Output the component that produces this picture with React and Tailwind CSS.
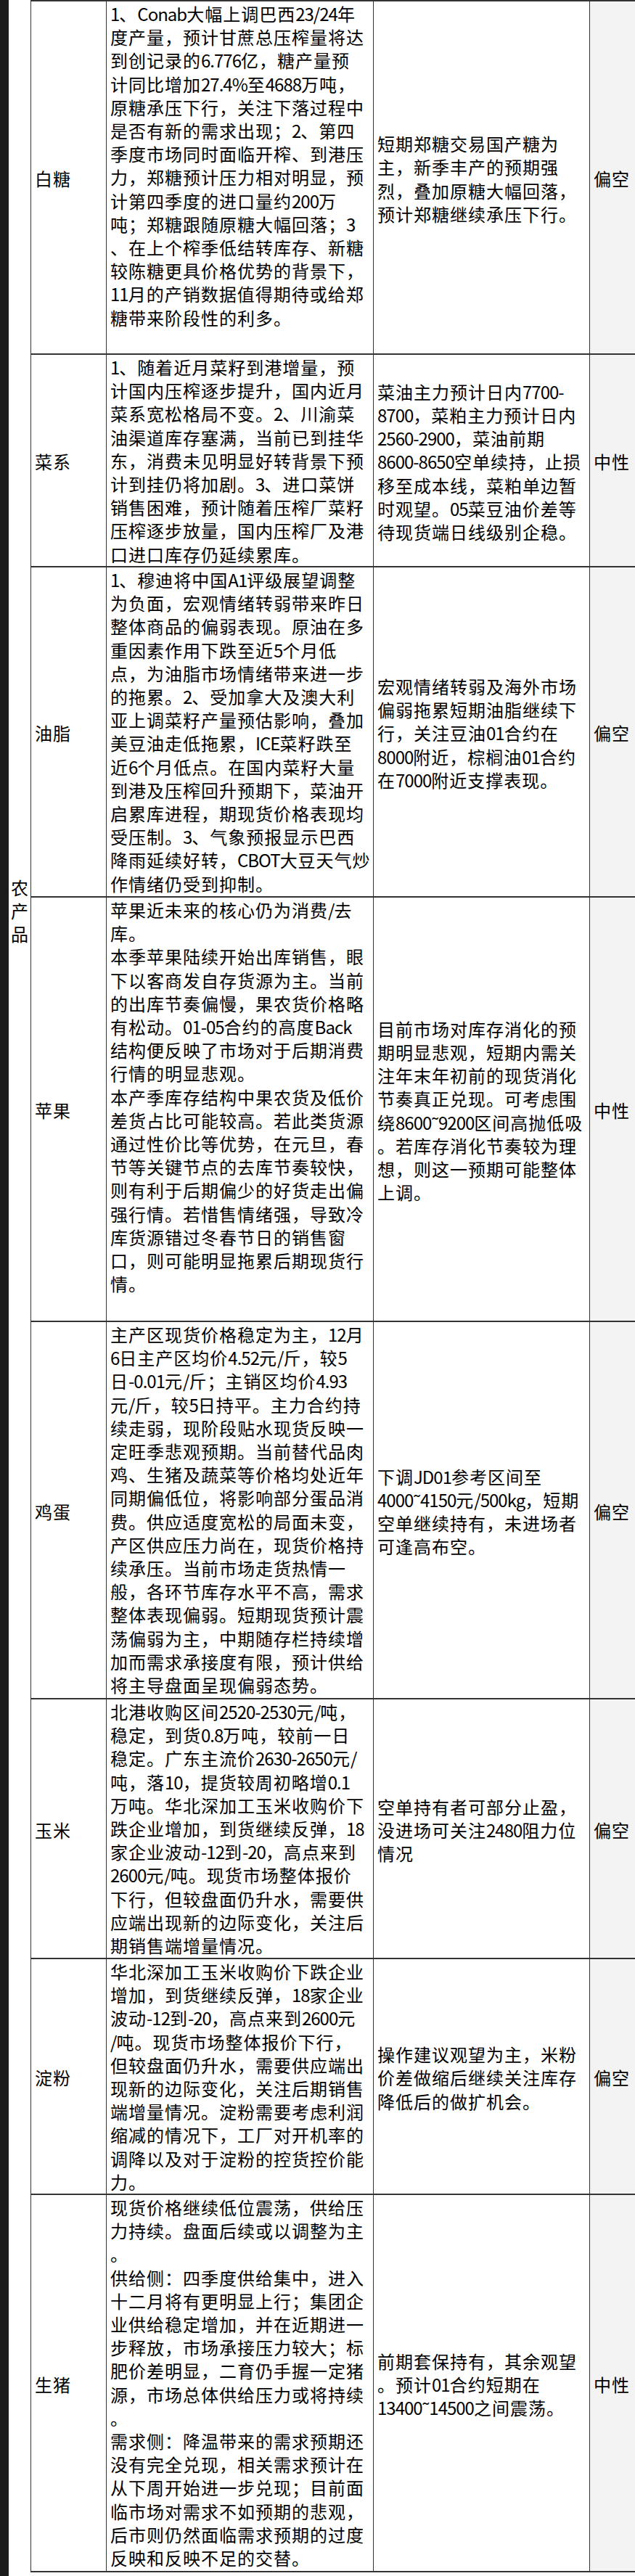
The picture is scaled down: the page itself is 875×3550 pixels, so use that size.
import React from "react";

const rows = [
  {
    name: "白糖",
    h: 487,
    view: "偏空",
    long: [
      "1、Conab大幅上调巴西23/24年",
      "度产量，预计甘蔗总压榨量将达",
      "到创记录的6.776亿，糖产量预",
      "计同比增加27.4%至4688万吨，",
      "原糖承压下行，关注下落过程中",
      "是否有新的需求出现；2、第四",
      "季度市场同时面临开榨、到港压",
      "力，郑糖预计压力相对明显，预",
      "计第四季度的进口量约200万",
      "吨；郑糖跟随原糖大幅回落；3",
      "、在上个榨季低结转库存、新糖",
      "较陈糖更具价格优势的背景下，",
      "11月的产销数据值得期待或给郑",
      "糖带来阶段性的利多。",
    ],
    short: [
      "短期郑糖交易国产糖为",
      "主，新季丰产的预期强",
      "烈，叠加原糖大幅回落，",
      "预计郑糖继续承压下行。",
    ],
  },
  {
    name: "菜系",
    h: 293,
    view: "中性",
    long: [
      "1、随着近月菜籽到港增量，预",
      "计国内压榨逐步提升，国内近月",
      "菜系宽松格局不变。2、川渝菜",
      "油渠道库存塞满，当前已到挂华",
      "东，消费未见明显好转背景下预",
      "计到挂仍将加剧。3、进口菜饼",
      "销售困难，预计随着压榨厂菜籽",
      "压榨逐步放量，国内压榨厂及港",
      "口进口库存仍延续累库。",
    ],
    short: [
      "菜油主力预计日内7700-",
      "8700，菜粕主力预计日内",
      "2560-2900，菜油前期",
      "8600-8650空单续持，止损",
      "移至成本线，菜粕单边暂",
      "时观望。05菜豆油价差等",
      "待现货端日线级别企稳。",
    ],
  },
  {
    name: "油脂",
    h: 455,
    view: "偏空",
    long: [
      "1、穆迪将中国A1评级展望调整",
      "为负面，宏观情绪转弱带来昨日",
      "整体商品的偏弱表现。原油在多",
      "重因素作用下跌至近5个月低",
      "点，为油脂市场情绪带来进一步",
      "的拖累。2、受加拿大及澳大利",
      "亚上调菜籽产量预估影响，叠加",
      "美豆油走低拖累，ICE菜籽跌至",
      "近6个月低点。在国内菜籽大量",
      "到港及压榨回升预期下，菜油开",
      "启累库进程，期现货价格表现均",
      "受压制。3、气象预报显示巴西",
      "降雨延续好转，CBOT大豆天气炒",
      "作情绪仍受到抑制。",
    ],
    short: [
      "宏观情绪转弱及海外市场",
      "偏弱拖累短期油脂继续下",
      "行，关注豆油01合约在",
      "8000附近，棕榈油01合约",
      "在7000附近支撑表现。",
    ],
  },
  {
    name: "苹果",
    h: 585,
    view: "中性",
    long: [
      "苹果近未来的核心仍为消费/去",
      "库。",
      "本季苹果陆续开始出库销售，眼",
      "下以客商发自存货源为主。当前",
      "的出库节奏偏慢，果农货价格略",
      "有松动。01-05合约的高度Back",
      "结构便反映了市场对于后期消费",
      "行情的明显悲观。",
      "本产季库存结构中果农货及低价",
      "差货占比可能较高。若此类货源",
      "通过性价比等优势，在元旦，春",
      "节等关键节点的去库节奏较快，",
      "则有利于后期偏少的好货走出偏",
      "强行情。若惜售情绪强，导致冷",
      "库货源错过冬春节日的销售窗",
      "口，则可能明显拖累后期现货行",
      "情。",
    ],
    short: [
      "目前市场对库存消化的预",
      "期明显悲观，短期内需关",
      "注年末年初前的现货消化",
      "节奏真正兑现。可考虑围",
      "绕8600˜9200区间高抛低吸",
      "。若库存消化节奏较为理",
      "想，则这一预期可能整体",
      "上调。",
    ],
  },
  {
    name: "鸡蛋",
    h: 520,
    view: "偏空",
    long: [
      "主产区现货价格稳定为主，12月",
      "6日主产区均价4.52元/斤，较5",
      "日-0.01元/斤；主销区均价4.93",
      "元/斤，较5日持平。主力合约持",
      "续走弱，现阶段贴水现货反映一",
      "定旺季悲观预期。当前替代品肉",
      "鸡、生猪及蔬菜等价格均处近年",
      "同期偏低位，将影响部分蛋品消",
      "费。供应适度宽松的局面未变，",
      "产区供应压力尚在，现货价格持",
      "续承压。当前市场走货热情一",
      "般，各环节库存水平不高，需求",
      "整体表现偏弱。短期现货预计震",
      "荡偏弱为主，中期随存栏持续增",
      "加而需求承接度有限，预计供给",
      "将主导盘面呈现偏弱态势。",
    ],
    short: [
      "下调JD01参考区间至",
      "4000˜4150元/500kg，短期",
      "空单继续持有，未进场者",
      "可逢高布空。",
    ],
  },
  {
    name: "玉米",
    h: 358,
    view: "偏空",
    long: [
      "北港收购区间2520-2530元/吨，",
      "稳定，到货0.8万吨，较前一日",
      "稳定。广东主流价2630-2650元/",
      "吨，落10，提货较周初略增0.1",
      "万吨。华北深加工玉米收购价下",
      "跌企业增加，到货继续反弹，18",
      "家企业波动-12到-20，高点来到",
      "2600元/吨。现货市场整体报价",
      "下行，但较盘面仍升水，需要供",
      "应端出现新的边际变化，关注后",
      "期销售端增量情况。",
    ],
    short: [
      "空单持有者可部分止盈，",
      "没进场可关注2480阻力位",
      "情况",
    ],
  },
  {
    name: "淀粉",
    h: 325,
    view: "偏空",
    long: [
      "华北深加工玉米收购价下跌企业",
      "增加，到货继续反弹，18家企业",
      "波动-12到-20，高点来到2600元",
      "/吨。现货市场整体报价下行，",
      "但较盘面仍升水，需要供应端出",
      "现新的边际变化，关注后期销售",
      "端增量情况。淀粉需要考虑利润",
      "缩减的情况下，工厂对开机率的",
      "调降以及对于淀粉的控货控价能",
      "力。",
    ],
    short: [
      "操作建议观望为主，米粉",
      "价差做缩后继续关注库存",
      "降低后的做扩机会。",
    ],
  },
  {
    name: "生猪",
    h: 520,
    view: "中性",
    long: [
      "现货价格继续低位震荡，供给压",
      "力持续。盘面后续或以调整为主",
      "。",
      "供给侧：四季度供给集中，进入",
      "十二月将有更明显上行；集团企",
      "业供给稳定增加，并在近期进一",
      "步释放，市场承接压力较大；标",
      "肥价差明显，二育仍手握一定猪",
      "源，市场总体供给压力或将持续",
      "。",
      "需求侧：降温带来的需求预期还",
      "没有完全兑现，相关需求预计在",
      "从下周开始进一步兑现；目前面",
      "临市场对需求不如预期的悲观，",
      "后市则仍然面临需求预期的过度",
      "反映和反映不足的交替。",
    ],
    short: [
      "前期套保持有，其余观望",
      "。预计01合约短期在",
      "13400˜14500之间震荡。",
    ],
  },
];

// digits and latin letters in the sheet are narrower than the CJK glyphs
function Line({ text }) {
  const parts = text.split(/([\x20-\x7E˜]+)/);
  return (
    <div className="whitespace-nowrap">
      {parts.map((p, i) =>
        /^[\x20-\x7E˜]+$/.test(p) ? (
          <span key={i} className="tracking-[-1px]">
            {p}
          </span>
        ) : (
          p
        )
      )}
    </div>
  );
}

function Lines({ lines }) {
  return (
    <div>
      {lines.map((l, i) => (
        <Line key={i} text={l} />
      ))}
    </div>
  );
}

export default function App() {
  return (
    <div className="w-[875px] h-[3550px] overflow-hidden bg-white flex text-black text-[24px] leading-[32.2px] tracking-[1px] font-['Noto_Sans_CJK_SC','Noto_Sans',sans-serif]">
      {/* dark strip on the left */}
      <div className="w-[12px] shrink-0 bg-[#1c1c1c]" />

      {/* 大类 column */}
      <div className="w-[30px] shrink-0 flex flex-col items-center pt-[1207px] leading-[32px] tracking-normal">
        <div>农</div>
        <div>产</div>
        <div>品</div>
      </div>

      <div className="flex-1 border-t-2 border-[#333]">
        {rows.map((r) => (
          <div
            key={r.name}
            className="grid grid-cols-[104px_368px_298px_1fr] border-b-2 border-[#333]"
            style={{ height: r.h }}
          >
            <div className="border-l border-[#333] flex items-center pl-[5px] pt-1">
              {r.name}
            </div>
            <div className="border-l border-[#333] pl-[5px] pt-[1px]">
              <Lines lines={r.long} />
            </div>
            <div className="border-l border-[#333] flex items-center pl-[5px] pt-1">
              <Lines lines={r.short} />
            </div>
            <div className="border-l border-[#333] bg-[#f3f3f3] flex items-center pl-[5px] pt-1 whitespace-nowrap">
              {r.view}
            </div>
          </div>
        ))}
      </div>
    </div>
  );
}
